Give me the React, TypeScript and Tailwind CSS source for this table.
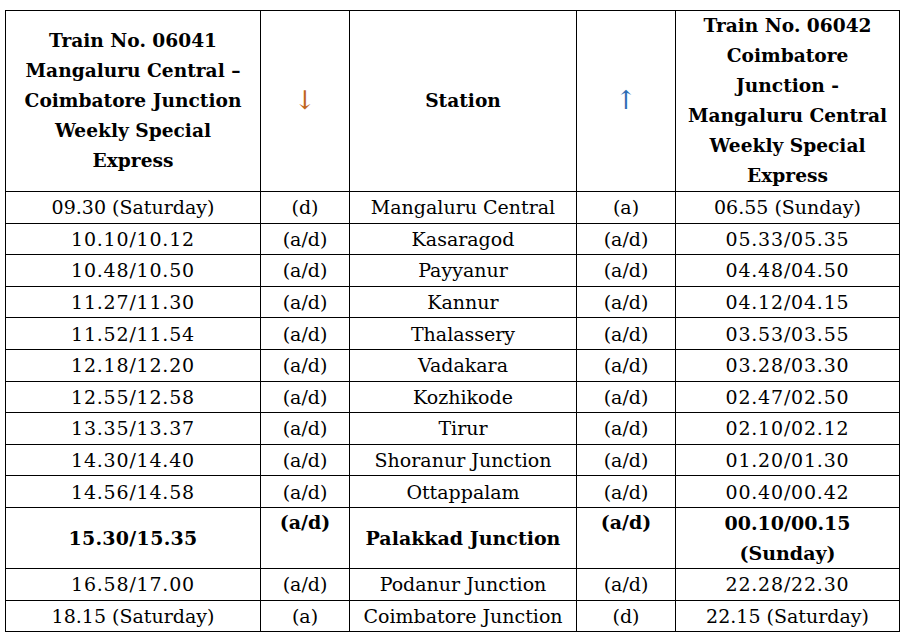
import React from "react";

const rows: [string, string, string, string, string][] = [
  ["09.30 (Saturday)", "(d)", "Mangaluru Central", "(a)", "06.55 (Sunday)"],
  ["10.10/10.12", "(a/d)", "Kasaragod", "(a/d)", "05.33/05.35"],
  ["10.48/10.50", "(a/d)", "Payyanur", "(a/d)", "04.48/04.50"],
  ["11.27/11.30", "(a/d)", "Kannur", "(a/d)", "04.12/04.15"],
  ["11.52/11.54", "(a/d)", "Thalassery", "(a/d)", "03.53/03.55"],
  ["12.18/12.20", "(a/d)", "Vadakara", "(a/d)", "03.28/03.30"],
  ["12.55/12.58", "(a/d)", "Kozhikode", "(a/d)", "02.47/02.50"],
  ["13.35/13.37", "(a/d)", "Tirur", "(a/d)", "02.10/02.12"],
  ["14.30/14.40", "(a/d)", "Shoranur Junction", "(a/d)", "01.20/01.30"],
  ["14.56/14.58", "(a/d)", "Ottappalam", "(a/d)", "00.40/00.42"],
];

const tail: [string, string, string, string, string][] = [
  ["16.58/17.00", "(a/d)", "Podanur Junction", "(a/d)", "22.28/22.30"],
  ["18.15 (Saturday)", "(a)", "Coimbatore Junction", "(d)", "22.15 (Saturday)"],
];

const td = "border border-black text-center align-middle p-0 whitespace-nowrap";
const isTime = (s: string) => /^\d\d\.\d\d\/\d\d\.\d\d$/.test(s);

function Row({ r }: { r: [string, string, string, string, string] }) {
  return (
    <tr className="h-[31.6px]">
      {r.map((c, i) => (
        <td key={i} className={isTime(c) ? td + " tracking-[0.8px]" : td}>
          {c}
        </td>
      ))}
    </tr>
  );
}

export default function App() {
  return (
    <div
      className="bg-white w-[907px] h-[637px] pt-[10px] pl-[5px] text-black"
      style={{ fontFamily: '"DejaVu Serif", serif' }}
    >
      <table className="border-collapse table-fixed w-[894px] text-[19px] leading-[22px]">
        <colgroup>
          <col className="w-[255px]" />
          <col className="w-[89px]" />
          <col className="w-[227px]" />
          <col className="w-[99px]" />
          <col className="w-[224px]" />
        </colgroup>
        <tbody>
          <tr className="h-[181px] font-bold text-[18.6px] leading-[30px]">
            <td className={td}>
              Train No. 06041
              <br />
              Mangaluru Central –
              <br />
              Coimbatore Junction
              <br />
              Weekly Special
              <br />
              Express
            </td>
            <td className={td}>
              <span className="font-normal text-[26px] text-[#c0661c]">↓</span>
            </td>
            <td className={td}>Station</td>
            <td className={td}>
              <span className="font-normal text-[26px] text-[#2f6db3]">↑</span>
            </td>
            <td className={td}>
              Train No. 06042
              <br />
              Coimbatore
              <br />
              Junction -
              <br />
              Mangaluru Central
              <br />
              Weekly Special
              <br />
              Express
            </td>
          </tr>
          {rows.map((r, i) => (
            <Row key={i} r={r} />
          ))}
          <tr className="h-[60px] font-bold">
            <td className={td + " tracking-[0.3px]"}>15.30/15.35</td>
            <td className="border border-black text-center align-top pt-[3px]">(a/d)</td>
            <td className={td}>Palakkad Junction</td>
            <td className="border border-black text-center align-top pt-[3px]">(a/d)</td>
            <td className={td + " leading-[30px]"}>
              00.10/00.15
              <br />
              (Sunday)
            </td>
          </tr>
          {tail.map((r, i) => (
            <Row key={i} r={r} />
          ))}
        </tbody>
      </table>
    </div>
  );
}
